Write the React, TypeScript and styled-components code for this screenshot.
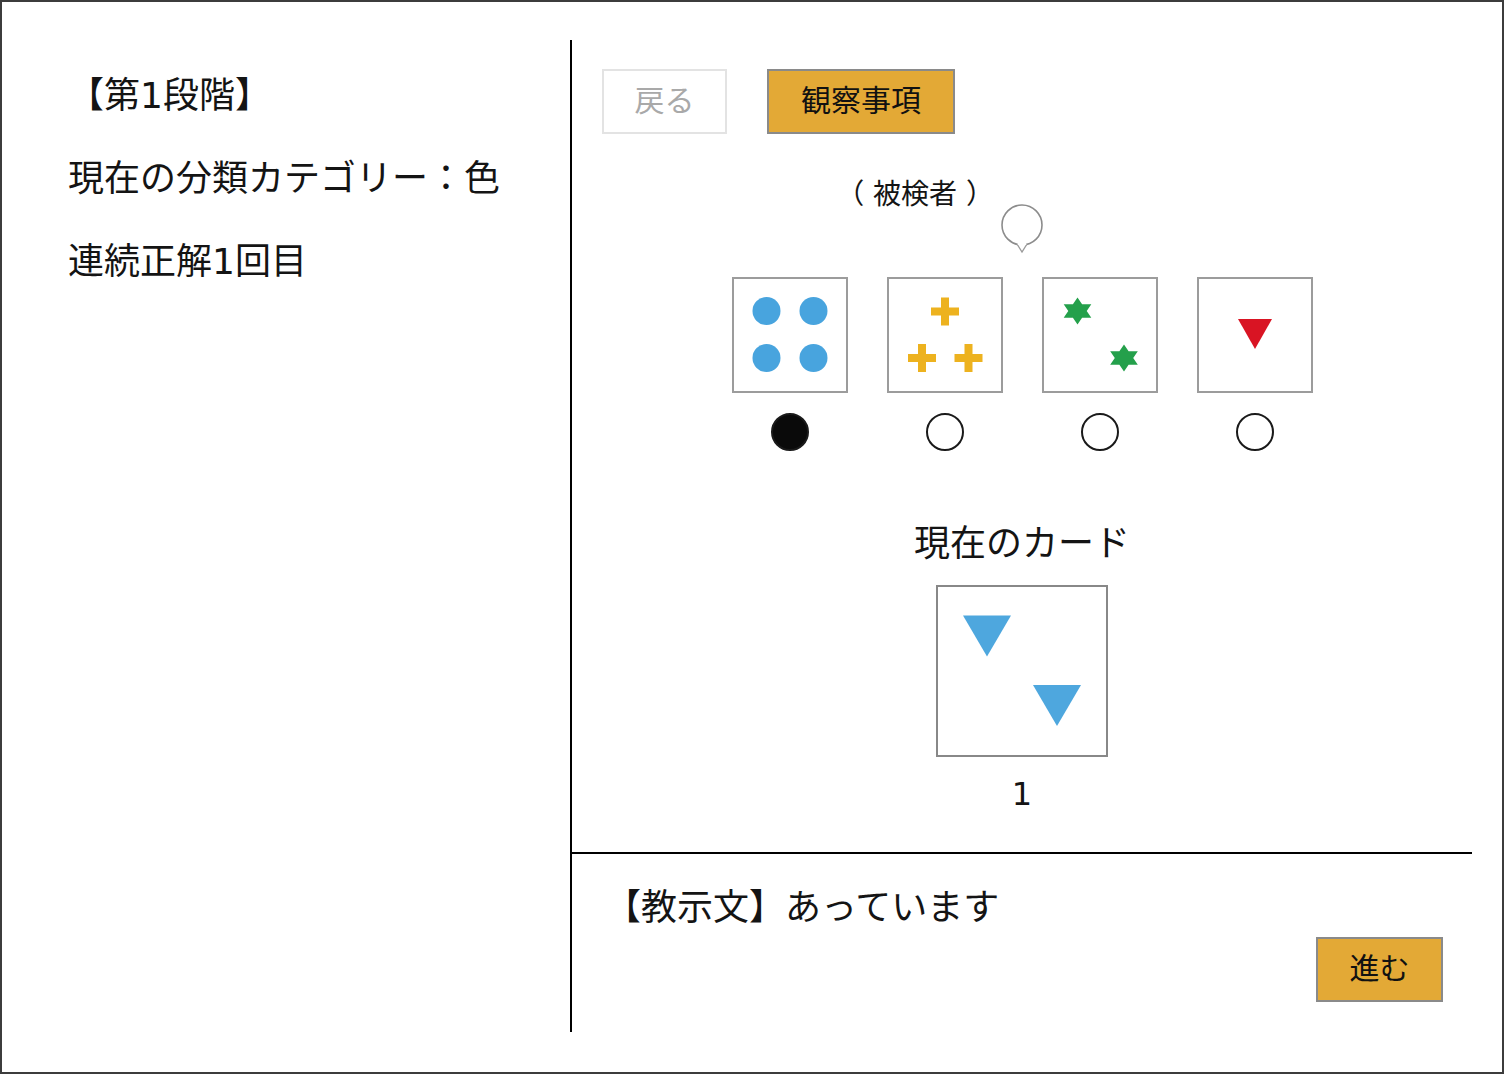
import React from 'react';
import styled, {createGlobalStyle} from 'styled-components';

const GlobalStyle = createGlobalStyle`
  html, body {
    margin: 0;
    padding: 0;
    background: #fff;
    overflow: hidden;
  }
  body {
    font-family: "DejaVu Sans", "Noto Sans CJK JP", sans-serif;
    color: #141414;
  }
`;

type Shape =
    | {kind: 'circle'; x: number; y: number}
    | {kind: 'cross'; x: number; y: number}
    | {kind: 'star'; x: number; y: number}
    | {kind: 'triangle'; x: number; y: number; w: number; h: number; color: string};

const blue = '#48a4de';
const yellow = '#edb21f';
const green = '#24a04b';
const red = '#d91423';
const gold = '#e3a936';

const choices: Shape[][] = [
    [
        {kind: 'circle', x: 32.5, y: 32},
        {kind: 'circle', x: 79.5, y: 32},
        {kind: 'circle', x: 32.5, y: 79},
        {kind: 'circle', x: 79.5, y: 79},
    ],
    [
        {kind: 'cross', x: 56, y: 32.5},
        {kind: 'cross', x: 33, y: 79},
        {kind: 'cross', x: 79.5, y: 79},
    ],
    [
        {kind: 'star', x: 33.5, y: 32},
        {kind: 'star', x: 80, y: 79},
    ],
    [
        {kind: 'triangle', x: 56, y: 40, w: 34, h: 30, color: red},
    ],
];

const currentCard: Shape[] = [
    {kind: 'triangle', x: 49, y: 28.5, w: 48, h: 41, color: '#4ea7de'},
    {kind: 'triangle', x: 119, y: 98, w: 48, h: 41, color: '#4ea7de'},
];

// hexagram, points up, a little flattened like the original
const starPoints = (cx: number, cy: number, r: number) => {
    const pts: string[] = [];
    for (let i = 0; i < 12; i++) {
        const a = (-90 + i * 30) * Math.PI / 180;
        const rr = i % 2 === 0 ? r : r / Math.sqrt(3);
        pts.push(`${(cx + rr * Math.cos(a) * 1.1).toFixed(2)},${(cy + rr * Math.sin(a) * 0.93).toFixed(2)}`);
    }
    return pts.join(' ');
};

const ShapeMark = ({shape}: {shape: Shape}) => {
    switch (shape.kind) {
        case 'circle':
            return <circle cx={shape.x} cy={shape.y} r={14} fill={blue}/>;
        case 'cross':
            return (
                <g fill={yellow}>
                    <rect x={shape.x - 14} y={shape.y - 4} width={28} height={8}/>
                    <rect x={shape.x - 4} y={shape.y - 14} width={8} height={28}/>
                </g>
            );
        case 'star':
            return <polygon points={starPoints(shape.x, shape.y, 14.5)} fill={green}/>;
        case 'triangle':
            return (
                <polygon
                    points={`${shape.x - shape.w / 2},${shape.y} ${shape.x + shape.w / 2},${shape.y} ${shape.x},${shape.y + shape.h}`}
                    fill={shape.color}
                />
            );
    }
};

const CardFace = ({shapes, size}: {shapes: Shape[]; size: number}) => (
    <svg width={size} height={size} viewBox={`0 0 ${size} ${size}`}>
        {shapes.map((s, i) => <ShapeMark key={i} shape={s}/>)}
    </svg>
);

export default function App() {
    return (
        <>
            <GlobalStyle/>
            <Frame>
                <LeftPanel>
                    <StatusLine>【第1段階】</StatusLine>
                    <StatusLine>現在の分類カテゴリー：色</StatusLine>
                    <StatusLine>連続正解1回目</StatusLine>
                </LeftPanel>

                <RightPanel>
                    <TopSection>
                        <ButtonRow>
                            <ActionButton $variant="disabled" $width={125}>戻る</ActionButton>
                            <ActionButton $variant="primary" $width={188}>観察事項</ActionButton>
                        </ButtonRow>

                        <SubjectRow>
                            <SubjectLabel>（ 被検者 ）</SubjectLabel>
                            <Bubble width="44" height="50" viewBox="0 0 44 50">
                                <circle cx="22" cy="21" r="20" fill="#fff" stroke="#8c8c8c" strokeWidth="1.6"/>
                                <path d="M17 40 L22 48 L27 40" fill="#fff" stroke="#9a9a9a" strokeWidth="1.4"/>
                                <rect x="17.8" y="38" width="8.4" height="3" fill="#fff"/>
                            </Bubble>
                            <span/>
                        </SubjectRow>

                        <CardRow>
                            {choices.map((shapes, i) => (
                                <Choice key={i}>
                                    <Card>
                                        <CardFace shapes={shapes} size={112}/>
                                    </Card>
                                    <Radio $checked={i === 0}/>
                                </Choice>
                            ))}
                        </CardRow>

                        <CurrentLabel>現在のカード</CurrentLabel>
                        <CurrentCard>
                            <CardFace shapes={currentCard} size={168}/>
                        </CurrentCard>
                        <CardNumber>1</CardNumber>
                    </TopSection>

                    <BottomSection>
                        <Instruction>【教示文】あっています</Instruction>
                        <NextButton $variant="primary" $width={127}>進む</NextButton>
                    </BottomSection>
                </RightPanel>
            </Frame>
        </>
    );
}

const Frame = styled.div`
  box-sizing: border-box;
  width: 1504px;
  height: 1074px;
  border: 2px solid #3c3c3c;
  padding: 38px 30px 40px 0;
  display: grid;
  grid-template-columns: 568px 1fr;
`;

const LeftPanel = styled.div`
  display: flex;
  flex-direction: column;
  gap: 33px;
  padding: 31px 0 0 66px;
`;

const StatusLine = styled.div`
  font-size: 36px;
  line-height: 50px;
  white-space: nowrap;
`;

const RightPanel = styled.div`
  border-left: 2px solid #000;
  display: flex;
  flex-direction: column;
  min-height: 0;
`;

const TopSection = styled.div`
  flex: 1;
  display: flex;
  flex-direction: column;
  align-items: center;
  padding-top: 29px;
`;

const ButtonRow = styled.div`
  align-self: stretch;
  display: flex;
  gap: 40px;
  padding-left: 30px;
`;

const ActionButton = styled.div<{ $variant: 'primary' | 'disabled'; $width: number }>`
  box-sizing: border-box;
  width: ${p => p.$width}px;
  height: 65px;
  padding-bottom: 8px;
  display: flex;
  align-items: center;
  justify-content: center;
  font-size: 30px;
  border: 2px solid ${p => p.$variant === 'primary' ? '#8a8a8a' : '#e3e3e3'};
  background: ${p => p.$variant === 'primary' ? gold : '#fff'};
  color: ${p => p.$variant === 'primary' ? '#111' : '#a9a9a9'};
`;

const SubjectRow = styled.div`
  align-self: stretch;
  display: grid;
  grid-template-columns: 1fr auto 1fr;
  align-items: start;
  margin-top: 44px;
`;

const SubjectLabel = styled.div`
  justify-self: end;
  margin-right: 6px;
  font-size: 28px;
  line-height: 34px;
  white-space: pre;
`;

const Bubble = styled.svg`
  display: block;
  margin-top: 26px;
`;

const CardRow = styled.div`
  display: flex;
  gap: 39px;
  margin-top: 23px;
`;

const Choice = styled.div`
  display: flex;
  flex-direction: column;
  align-items: center;
  gap: 20px;
`;

const Card = styled.div`
  box-sizing: border-box;
  width: 116px;
  height: 116px;
  border: 2px solid #9c9c9c;

  svg {
    display: block;
  }
`;

const Radio = styled.span<{ $checked: boolean }>`
  box-sizing: border-box;
  width: 38px;
  height: 38px;
  border-radius: 50%;
  border: 2px solid #1a1a1a;
  background: ${p => p.$checked ? '#0a0a0a' : '#fff'};
`;

const CurrentLabel = styled.div`
  margin-top: 71px;
  font-size: 36px;
  line-height: 44px;
`;

const CurrentCard = styled.div`
  box-sizing: border-box;
  width: 172px;
  height: 172px;
  margin-top: 19px;
  border: 2px solid #888;

  svg {
    display: block;
  }
`;

const CardNumber = styled.div`
  margin-top: 17px;
  font-size: 32px;
  line-height: 40px;
`;

const BottomSection = styled.div`
  box-sizing: border-box;
  height: 180px;
  border-top: 2px solid #000;
  padding: 29px 29px 0 33px;
  display: flex;
  flex-direction: column;
`;

const Instruction = styled.div`
  font-size: 36px;
  line-height: 50px;
  white-space: nowrap;
`;

const NextButton = styled(ActionButton)`
  align-self: flex-end;
  margin-top: 4px;
`;
